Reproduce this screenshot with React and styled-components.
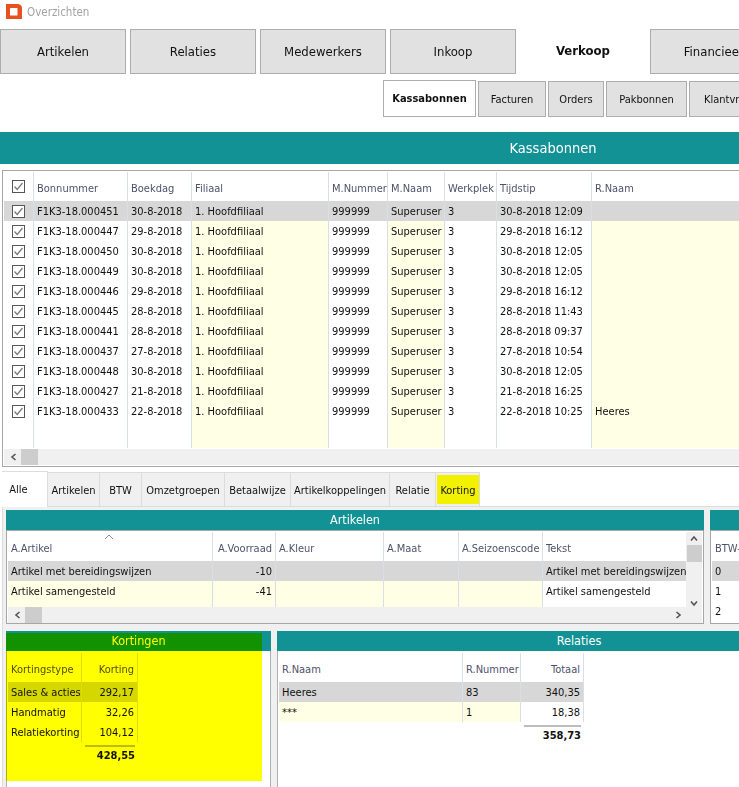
import React from "react";
import styled, { createGlobalStyle } from "styled-components";

const Global = createGlobalStyle`
  html, body { margin: 0; padding: 0; background: #fff; }
  body { font-family: "DejaVu Sans Condensed", "Noto Sans", "Liberation Sans", sans-serif; font-size: 11px; color: #111; }
`;

const Page = styled.div`
  width: 739px; height: 787px; overflow: hidden; background: #fff;
`;
const TitleBar = styled.div`
  height: 29px; display: flex; align-items: center; gap: 5px; padding: 0 0 6px 6px; box-sizing: border-box;
  color: #a3a3a3; font-size: 11.5px;
`;
const MainTabs = styled.div`display: flex; gap: 4px; width: 900px;`;
const MainTab = styled.div`
  flex: none; width: 126px; height: 45px; box-sizing: border-box; display: flex; align-items: center; justify-content: center;
  font-size: 13px; color: #111;
  border: 1px solid ${p => (p.$active ? "transparent" : "#adadad")};
  background: ${p => (p.$active ? "#fff" : "#e1e1e1")};
  font-weight: ${p => (p.$active ? 700 : 400)};
  padding-bottom: ${p => (p.$active ? "3px" : "0")};
`;
const SubTabs = styled.div`display: flex; align-items: flex-end; gap: 2px; height: 37px; margin: 6px 0 0 383px; width: 500px;`;
const SubTab = styled.div`
  flex: none; box-sizing: border-box; width: ${p => p.$w}px; height: ${p => (p.$active ? 37 : 36)}px;
  border: 1px solid #adadad; display: flex; align-items: center; justify-content: center;
  background: ${p => (p.$active ? "#fff" : "#e1e1e1")};
  font-weight: ${p => (p.$active ? 700 : 400)};
  color: #111;
`;
const Banner = styled.div`
  flex: none; background: #139296; color: #fff; text-align: center; box-sizing: border-box;
  width: ${p => p.$w}px; height: ${p => p.$h}px; line-height: ${p => p.$h}px; font-size: ${p => p.$fs}px;
`;
const MainBanner = styled(Banner)`margin-top: 15px;`;
const GridFrame = styled.div`
  box-sizing: border-box; border: 1px solid #a6a6a6; padding: 1px; background: #fff;
  width: ${p => p.$w}px; height: ${p => p.$h}px; display: flex; flex-direction: column; flex: none;
`;
const MainGrid = styled(GridFrame)`margin: 6px 0 0 2px;`;
const Columns = styled.div`display: flex; flex: none; height: ${p => p.$h}px; min-width: 0;`;
const BodyRow = styled.div`display: flex; flex: none;`;
const Col = styled.div`
  flex: none; box-sizing: border-box; width: ${p => p.$w}px; display: flex; flex-direction: column; position: relative;
  border-right: ${p => (p.$open ? "0" : "1px solid #d9dfe8")};
`;
const Head = styled.div`
  flex: none; height: 29px; padding: 3px 3px 0 3px; box-sizing: border-box; display: flex; align-items: center; white-space: nowrap;
  color: #50506c; justify-content: ${p => (p.$right ? "flex-end" : "flex-start")};
`;
const Body = styled.div`flex: 1; background: ${p => (p.$cream ? "#ffffe6" : "#fff")};`;
const Cell = styled.div`
  height: 20px; line-height: 22px; padding: 0 3px; white-space: nowrap; overflow: hidden;
  background: ${p => (p.$sel ? "#d7d7d7" : "transparent")}; color: #111;
  text-align: ${p => (p.$right ? "right" : "left")};
`;
const CheckCell = styled.div`height: 20px; display: flex; align-items: center; padding-left: 8px; background: ${p => (p.$sel ? "#d7d7d7" : "transparent")};`;
const HeadCheck = styled.div`flex: none; height: 29px; display: flex; align-items: center; padding: 0 0 0 8px;`;
const HBar = styled.div`flex: none; height: 16px; background: #f0f0f0; display: flex; align-items: center; margin-top: ${p => p.$gap || 0}px; padding-left: 6px;`;
const Thumb = styled.div`flex: none; width: 17px; height: 16px; background: #cdcdcd; margin-left: 3px;`;
const Spacer = styled.div`flex: 1;`;
const ArrowGap = styled.div`flex: none; width: 20px;`;
const VBar = styled.div`flex: none; width: 16px; background: #f0f0f0; display: flex; flex-direction: column; align-items: center; padding-top: 3px; box-sizing: border-box; height: 75px;`;
const VThumb = styled.div`flex: none; width: 15px; height: 17px; background: #cdcdcd; margin-top: 2px;`;
const TabStrip = styled.div`
  display: flex; align-items: flex-end; height: 36px; margin: 4px 0 0 2px; box-sizing: border-box; position: relative;
  border-bottom: 1px solid #dcdcdc;
`;
const DetailTab = styled.div`
  flex: none; box-sizing: border-box; width: ${p => p.$w}px; height: ${p => (p.$active ? 36 : 34)}px;
  background: ${p => (p.$active ? "#fff" : "#f0f0f0")};
  border: 1px solid #dcdcdc; border-width: 1px 1px 0 0;
  display: flex; align-items: stretch; padding: ${p => (p.$hl ? "2px 0 2px 1px" : "0")};
  margin-bottom: ${p => (p.$active ? "-1px" : "0")};
`;
const TabLabel = styled.span`
  flex: 1; display: flex; align-items: center; justify-content: center; white-space: nowrap; color: #111;
  background: ${p => (p.$hl ? "#f2f200" : "transparent")};
  padding-top: ${p => (p.$active ? "0" : "1px")};
  padding-right: ${p => (p.$active ? "12px" : "0")};
`;
const Band = styled.div`
  background: #f0f0f0; margin-left: 2px; padding-left: 3px; border-left: 1px solid #dcdcdc; display: flex; width: 1100px;
`;
const Lower = styled(Band)`padding-top: 3px; padding-bottom: 7px; gap: 6px;`;
const Bottom = styled(Band)`height: 156px; gap: 6px;`;
const Stack = styled.div`display: flex; flex-direction: column; flex: none;`;
const BottomPanel = styled.div`
  position: relative; flex: none; width: ${p => p.$w}px; height: 156px; display: flex; flex-direction: column; background: #fff;
`;
const PanelBody = styled.div`
  flex: 1; display: flex; flex-direction: column; padding: 2px 0 0 1px; box-sizing: border-box;
  border-left: 1px solid #b0b0b0; border-right: ${p => (p.$edge ? "1px solid #b0b0b0" : "0")};
`;
const TotalRow = styled.div`
  display: flex; flex-direction: column; align-items: flex-end; box-sizing: border-box; width: ${p => p.$w}px; margin-top: 3px;
`;
const TotalBar = styled.div`width: ${p => p.$w}px; height: 2px; background: #bdbdbd;`;
const TotalValue = styled.div`font-weight: 700; height: 20px; line-height: 18px; color: #111;`;
const Highlight = styled.div`
  position: absolute; left: 0; top: 2px; width: 256px; height: 148px; background: #ffff00; mix-blend-mode: multiply; pointer-events: none;
`;
const SortMark = styled.svg`position: absolute; left: 96px; top: 2px;`;
const Ico = styled.svg`flex: none; display: block;`;

const Check = () => (
  <Ico width="13" height="13" viewBox="0 0 13 13">
    <rect x=".5" y=".5" width="12" height="12" fill="#fff" stroke="#555" />
    <path d="M2.5 6.5 5.2 9.5 10.5 3" fill="none" stroke="#777" strokeWidth="1.2" />
  </Ico>
);
const Chev = ({ d, w = 8, h = 8 }) => (
  <Ico width={w} height={h} viewBox="0 0 8 8"><path d={d} fill="none" stroke="#555" strokeWidth="1.6" /></Ico>
);
const Logo = () => (
  <Ico width="16" height="15" viewBox="0 0 16 15">
    <path d="M0 0H12.5Q16 1 16 4V15H0Z" fill="#e8501f" />
    <rect x="4" y="4" width="7.5" height="7.5" rx=".5" fill="#fff" />
  </Ico>
);

const topCols = [
  { h: "Bonnummer", w: 94, v: ["F1K3-18.000451","F1K3-18.000447","F1K3-18.000450","F1K3-18.000449","F1K3-18.000446","F1K3-18.000445","F1K3-18.000441","F1K3-18.000437","F1K3-18.000448","F1K3-18.000427","F1K3-18.000433"] },
  { h: "Boekdag", w: 64, v: ["30-8-2018","29-8-2018","30-8-2018","30-8-2018","29-8-2018","28-8-2018","28-8-2018","27-8-2018","30-8-2018","21-8-2018","22-8-2018"] },
  { h: "Filiaal", w: 137, cream: true, v: Array(11).fill("1. Hoofdfiliaal") },
  { h: "M.Nummer", w: 59, v: Array(11).fill("999999") },
  { h: "M.Naam", w: 57, cream: true, v: Array(11).fill("Superuser") },
  { h: "Werkplek", w: 52, v: Array(11).fill("3") },
  { h: "Tijdstip", w: 95, v: ["30-8-2018 12:09","29-8-2018 16:12","30-8-2018 12:05","30-8-2018 12:05","29-8-2018 16:12","28-8-2018 11:43","28-8-2018 09:37","27-8-2018 10:54","30-8-2018 12:05","21-8-2018 16:25","22-8-2018 10:25"] },
  { h: "R.Naam", w: 500, cream: true, open: true, v: ["","","","","","","","","","","Heeres"] },
];
const artCols = [
  { h: "A.Artikel", w: 205, cream: true, sort: true, v: ["Artikel met bereidingswijzen", "Artikel samengesteld"] },
  { h: "A.Voorraad", w: 63, cream: true, right: true, v: ["-10", "-41"] },
  { h: "A.Kleur", w: 108, cream: true, v: ["", ""] },
  { h: "A.Maat", w: 75, cream: true, v: ["", ""] },
  { h: "A.Seizoenscode", w: 84, cream: true, v: ["", ""] },
  { h: "Tekst", w: 143, open: true, v: ["Artikel met bereidingswijzen", "Artikel samengesteld"] },
];
const btwCols = [{ h: "BTW-%", w: 120, v: ["0", "1", "2"] }];
const kortCols = [
  { h: "Kortingstype", w: 74, v: ["Sales & acties", "Handmatig", "Relatiekorting"] },
  { h: "Korting", w: 56, right: true, v: ["292,17", "32,26", "104,12"] },
];
const relCols = [
  { h: "R.Naam", w: 184, cream: true, v: ["Heeres", "***"] },
  { h: "R.Nummer", w: 58, cream: true, v: ["83", "1"] },
  { h: "Totaal", w: 63, right: true, v: ["340,35", "18,38"] },
];

const DataCols = ({ cols }) =>
  cols.map(c => (
    <Col key={c.h} $w={c.w} $open={c.open}>
      <Head $right={c.right}>{c.h}</Head>
      {c.sort && (
        <SortMark width="10" height="6" viewBox="0 0 10 6"><path d="M1 5 5 1 9 5" fill="none" stroke="#888" /></SortMark>
      )}
      <Body $cream={c.cream}>
        {c.v.map((t, i) => (
          <Cell key={i} $sel={i === 0} $right={c.right}>{t}</Cell>
        ))}
      </Body>
    </Col>
  ));

const tabs = [
  ["Alle", 46], ["Artikelen", 52], ["BTW", 42], ["Omzetgroepen", 83], ["Betaalwijze", 66],
  ["Artikelkoppelingen", 99], ["Relatie", 46], ["Korting", 44],
];

export default function App() {
  return (
    <Page>
      <Global />
      <TitleBar><Logo />Overzichten</TitleBar>
      <MainTabs>
        {["Artikelen", "Relaties", "Medewerkers", "Inkoop", "Verkoop", "Financieel"].map(t => (
          <MainTab key={t} $active={t === "Verkoop"}>{t}</MainTab>
        ))}
      </MainTabs>
      <SubTabs>
        <SubTab $w={93} $active>Kassabonnen</SubTab>
        <SubTab $w={68}>Facturen</SubTab>
        <SubTab $w={56}>Orders</SubTab>
        <SubTab $w={81}>Pakbonnen</SubTab>
        <SubTab $w={90}>Klantvragen</SubTab>
      </SubTabs>
      <MainBanner $w={1106} $h={32} $fs={14.5}>Kassabonnen</MainBanner>
      <MainGrid $w={1100} $h={297}>
        <Columns $h={276}>
          <Col $w={30}>
            <HeadCheck><Check /></HeadCheck>
            <Body>
              {topCols[0].v.map((_, i) => (
                <CheckCell key={i} $sel={i === 0}><Check /></CheckCell>
              ))}
            </Body>
          </Col>
          <DataCols cols={topCols} />
        </Columns>
        <HBar $gap={1}>
          <Chev d="M5.5 1 2 4 5.5 7" /><Thumb />
        </HBar>
      </MainGrid>
      <TabStrip>
        {tabs.map(([t, w]) => (
          <DetailTab key={t} $w={w} $active={t === "Alle"} $hl={t === "Korting"}>
            <TabLabel $hl={t === "Korting"} $active={t === "Alle"}>{t}</TabLabel>
          </DetailTab>
        ))}
      </TabStrip>
      <Lower>
        <Stack>
          <Banner $w={698} $h={20} $fs={12.5}>Artikelen</Banner>
          <GridFrame $w={698} $h={94}>
            <BodyRow>
              <Columns $h={75}><DataCols cols={artCols} /></Columns>
              <VBar>
                <Chev d="M1 5.5 4 2 7 5.5" />
                <VThumb />
                <Spacer />
                <Chev d="M1 2.5 4 6 7 2.5" />
              </VBar>
            </BodyRow>
            <HBar>
              <Chev d="M5.5 1 2 4 5.5 7" /><Thumb /><Spacer />
              <Chev d="M2.5 1 6 4 2.5 7" />
              <ArrowGap />
            </HBar>
          </GridFrame>
        </Stack>
        <Stack>
          <Banner $w={300} $h={20} $fs={12.5}>BTW</Banner>
          <GridFrame $w={300} $h={94}>
            <Columns $h={89}><DataCols cols={btwCols} /></Columns>
          </GridFrame>
        </Stack>
      </Lower>
      <Bottom>
        <BottomPanel $w={265}>
          <Banner $w={265} $h={20} $fs={12.5}>Kortingen</Banner>
          <PanelBody $edge>
            <Columns $h={89}><DataCols cols={kortCols} /></Columns>
            <TotalRow $w={127}>
              <TotalBar $w={50} />
              <TotalValue>428,55</TotalValue>
            </TotalRow>
          </PanelBody>
          <Highlight />
        </BottomPanel>
        <BottomPanel $w={604}>
          <Banner $w={604} $h={20} $fs={12.5}>Relaties</Banner>
          <PanelBody>
            <Columns $h={69}><DataCols cols={relCols} /></Columns>
            <TotalRow $w={302}>
              <TotalBar $w={57} />
              <TotalValue>358,73</TotalValue>
            </TotalRow>
          </PanelBody>
        </BottomPanel>
      </Bottom>
    </Page>
  );
}
